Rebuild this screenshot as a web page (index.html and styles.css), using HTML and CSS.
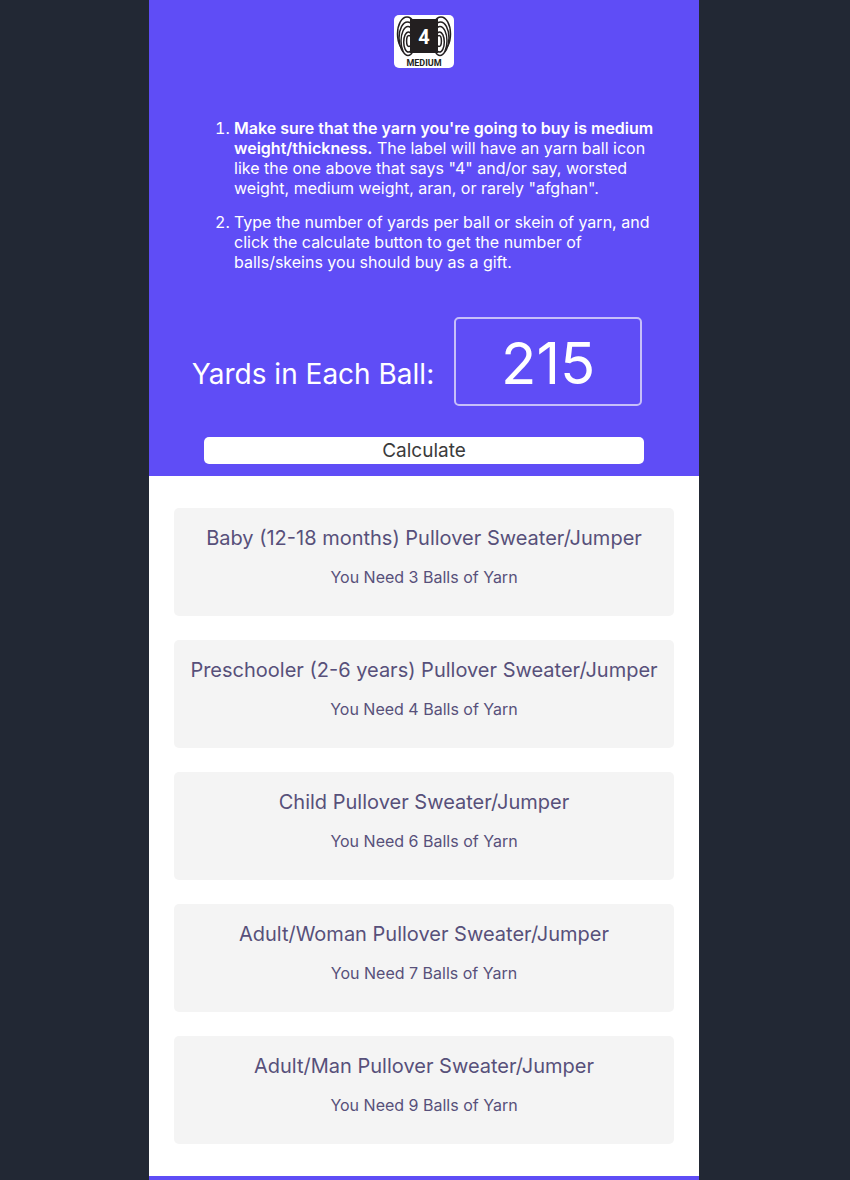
FILE: index.html
```
<!DOCTYPE html>
<html lang="en">
<head>
<meta charset="utf-8">
<meta name="viewport" content="width=device-width, initial-scale=1">
<title>Yarn Calculator</title>
<link rel="stylesheet" href="styles.css">
</head>
<body>
<main class="app">
  <section class="intro">
    <svg class="logo" viewBox="0 0 60 53" role="img" aria-label="Medium weight yarn, 4">
      <rect width="60" height="53" rx="5" fill="#fff"/>
      <g fill="#fff" stroke="#231f20" stroke-width="1.5">
        <g id="loops">
          <ellipse cx="13" cy="19" rx="9.500" ry="17"/>
          <ellipse cx="13.500" cy="23" rx="8.500" ry="16"/>
          <ellipse cx="14" cy="26" rx="7" ry="14.500"/>
          <ellipse cx="14.500" cy="27" rx="4.800" ry="10"/>
          <ellipse cx="15" cy="26" rx="2.400" ry="5.500"/>
        </g>
        <use href="#loops" transform="matrix(-1 0 0 1 60 0)"/>
      </g>
      <rect x="16" y="4" width="28" height="34" fill="#231f20"/>
      <text class="logo-number" x="30" y="29" text-anchor="middle">4</text>
      <text class="logo-word" x="30" y="51" text-anchor="middle">MEDIUM</text>
    </svg>
    <ol class="steps">
      <li><strong>Make sure that the yarn you're going to buy is medium weight/thickness.</strong> The label will have an yarn ball icon like the one above that says "4" and/or say, worsted weight, medium weight, aran, or rarely "afghan".</li>
      <li>Type the number of yards per ball or skein of yarn, and click the calculate button to get the number of balls/skeins you should buy as a gift.</li>
    </ol>
    <form class="form" onsubmit="return false">
      <div class="field">
        <label for="yards">Yards in Each Ball:</label>
        <input id="yards" type="text" inputmode="numeric" value="215">
      </div>
      <button type="submit">Calculate</button>
    </form>
  </section>
  <section class="results">
    <article class="card"><h2>Baby (12-18 months) Pullover Sweater/Jumper</h2><p>You Need 3 Balls of Yarn</p></article>
    <article class="card"><h2>Preschooler (2-6 years) Pullover Sweater/Jumper</h2><p>You Need 4 Balls of Yarn</p></article>
    <article class="card"><h2>Child Pullover Sweater/Jumper</h2><p>You Need 6 Balls of Yarn</p></article>
    <article class="card"><h2>Adult/Woman Pullover Sweater/Jumper</h2><p>You Need 7 Balls of Yarn</p></article>
    <article class="card"><h2>Adult/Man Pullover Sweater/Jumper</h2><p>You Need 9 Balls of Yarn</p></article>
  </section>
  <footer class="footer"></footer>
</main>
</body>
</html>
```
FILE: styles.css
```
* {
  box-sizing: border-box;
}

body {
  margin: 0;
  padding-right: 2px;
  background: #222834;
  font-family: Inter, "Liberation Sans", sans-serif;
  font-size: 16px;
  line-height: 20px;
}

.app {
  display: flex;
  flex-direction: column;
  max-width: 550px;
  min-height: 100vh;
  margin: 0 auto;
  background: #fff;
}

.intro {
  display: flex;
  flex-direction: column;
  align-items: center;
  padding: 15px 16px 12px;
  background: #5f4df6;
  color: #fff;
}

.logo {
  width: 60px;
  height: 53px;
}

.logo-number {
  fill: #fff;
  font: bold 20px Roboto, sans-serif;
}

.logo-word {
  fill: #231f20;
  font: bold 9px Roboto, sans-serif;
}

.steps {
  display: grid;
  gap: 14px;
  max-width: 460px;
  margin: 50px 0 0;
  padding-left: 40px;
}

.steps strong {
  font-weight: 600;
}

.form {
  display: flex;
  flex-direction: column;
  align-items: center;
  width: 100%;
  margin-top: 45px;
}

.field {
  display: flex;
  align-items: baseline;
  justify-content: center;
  gap: 20px;
  padding-right: 14px;
}

.field label {
  font-size: 28px;
  line-height: 36px;
}

.field input {
  width: 188px;
  min-width: 0;
  height: 89px;
  padding: 2px 8px 0;
  border: 2px solid #c6bff9;
  border-radius: 5px;
  background: transparent;
  color: #fff;
  font: inherit;
  font-size: 58px;
  line-height: 72px;
  text-align: center;
}

.form button {
  width: 100%;
  max-width: 440px;
  margin-top: 31px;
  padding: 1px 0 0;
  border: 0;
  border-radius: 5px;
  background: #fff;
  color: #3b3b3b;
  font: inherit;
  font-size: 19px;
  line-height: 26px;
}

.results {
  display: grid;
  gap: 24px;
  padding: 32px 25px;
}

.card {
  padding: 16px 8px 29px;
  border-radius: 5px;
  background: #f4f4f4;
  color: #57507a;
  text-align: center;
}

.card h2 {
  margin: 0;
  font-size: 20px;
  font-weight: 400;
  line-height: 28px;
}

.card p {
  margin: 15px 0 0;
}

.footer {
  flex: 1;
  min-height: 4px;
  background: #5f4df6;
}
```
